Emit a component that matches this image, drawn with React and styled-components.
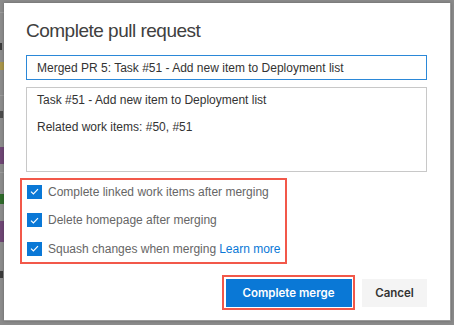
import React from "react";
import styled, { createGlobalStyle } from "styled-components";

const GlobalStyle = createGlobalStyle`
  html, body {
    margin: 0;
    padding: 0;
    background: #8a8a8a;
  }
  * {
    box-sizing: border-box;
  }
`;

const Page = styled.div`
  width: 454px;
  height: 325px;
  display: flex;
  flex-direction: row;
  background: #8b8b8b;
  overflow: hidden;
  font-family: "Liberation Sans", Arial, sans-serif;
`;

const Backdrop = styled.div`
  width: 4px;
  display: flex;
  flex-direction: column;
  flex-shrink: 0;
`;

const Bit = styled.div`
  height: ${p => p.h}px;
  margin-top: ${p => p.top || 0}px;
  width: ${p => p.w || 4}px;
  background: ${p => p.color};
`;

const Dialog = styled.div`
  width: 447px;
  height: 318px;
  margin-top: 3px;
  background: #ffffff;
  border-right: 1px solid #9a9a9a;
  border-bottom: 1px solid #9a9a9a;
  box-shadow: 0 0 3px rgba(0, 0, 0, 0.25);
  padding: 0 23px 0 22px;
  display: flex;
  flex-direction: column;
`;

const Title = styled.h1`
  margin: 16px 0 0 0;
  font-size: 19px;
  line-height: 24px;
  letter-spacing: -0.5px;
  font-weight: 400;
  color: #404040;
`;

const TitleInput = styled.input`
  margin-top: 12px;
  width: 100%;
  height: 25px;
  border: 1px solid #2b88d8;
  padding: 0 10px;
  font-family: inherit;
  font-size: 12px;
  color: #333333;
  outline: none;
`;

const Description = styled.textarea`
  margin-top: 7px;
  width: 100%;
  height: 85px;
  border: 1px solid #c8c8c8;
  padding: 6px 10px;
  font-family: inherit;
  font-size: 12px;
  line-height: 13.3px;
  color: #333333;
  resize: none;
  outline: none;
`;

const Highlight = styled.div`
  border: 2.5px solid #f2584a;
`;

const OptionsBox = styled(Highlight)`
  margin: 6px 0 0 -6px;
  width: 267px;
  padding: 4px 8px 6px 5px;
  display: flex;
  flex-direction: column;
  gap: 13.5px;
`;

const Option = styled.label`
  display: flex;
  align-items: center;
  height: 15px;
  font-size: 12px;
  color: #666666;
  white-space: nowrap;
`;

const Box = styled.span`
  width: 15px;
  height: 14px;
  background: #0a78d6;
  display: flex;
  align-items: center;
  justify-content: center;
  margin-right: 6px;
  flex-shrink: 0;
`;

const Link = styled.a`
  color: #0a78d6;
  margin-left: 3px;
  text-decoration: none;
`;

const Footer = styled.div`
  margin-top: 11px;
  display: flex;
  justify-content: flex-end;
  align-items: center;
  gap: 7px;
`;

const PrimaryWrap = styled(Highlight)`
  padding: 1.5px;
  background: #ffffff;
`;

const Button = styled.button`
  height: 28px;
  width: ${p => p.w}px;
  border: none;
  padding: 0;
  font-family: Inter, "Liberation Sans", sans-serif;
  font-size: 11.5px;
  font-weight: 600;
  background: ${p => (p.primary ? "#0a78d6" : "#f4f4f4")};
  color: ${p => (p.primary ? "#ffffff" : "#333333")};
  display: block;
`;

const Check = () => (
  <svg width="9" height="7" viewBox="0 0 9 7">
    <path d="M1 3.6 L3.4 6 L8 1.2" fill="none" stroke="#fff" strokeWidth="1.2" />
  </svg>
);

const options = [
  { label: "Complete linked work items after merging" },
  { label: "Delete homepage after merging" },
  { label: "Squash changes when merging", link: "Learn more" },
];

export default function App() {
  return (
    <>
      <GlobalStyle />
      <Page>
        <Backdrop>
          <Bit h={1} top={12} color="#9a9a9a" />
          <Bit h={7} top={30} w={2} color="#3a3a3a" />
          <Bit h={8} top={12} color="#a8954a" />
          <Bit h={1} top={25} color="#9a9a9a" />
          <Bit h={7} top={15} w={3} color="#4a4a4a" />
          <Bit h={17} top={29} color="#6e4674" />
          <Bit h={1} top={8} color="#9a9a9a" />
          <Bit h={10} top={21} color="#2f6a2a" />
          <Bit h={21} top={17} color="#6e4674" />
          <Bit h={7} top={29} w={3} color="#3a3a3a" />
        </Backdrop>
        <Dialog>
          <Title>Complete pull request</Title>
          <TitleInput
            readOnly
            value="Merged PR 5: Task #51 - Add new item to Deployment list"
          />
          <Description
            readOnly
            value={"Task #51 - Add new item to Deployment list\n\nRelated work items: #50, #51"}
          />
          <OptionsBox>
            {options.map(o => (
              <Option key={o.label}>
                <Box>
                  <Check />
                </Box>
                {o.label}
                {o.link && <Link href="#">{o.link}</Link>}
              </Option>
            ))}
          </OptionsBox>
          <Footer>
            <PrimaryWrap>
              <Button primary w={126}>Complete merge</Button>
            </PrimaryWrap>
            <Button w={65}>Cancel</Button>
          </Footer>
        </Dialog>
      </Page>
    </>
  );
}
